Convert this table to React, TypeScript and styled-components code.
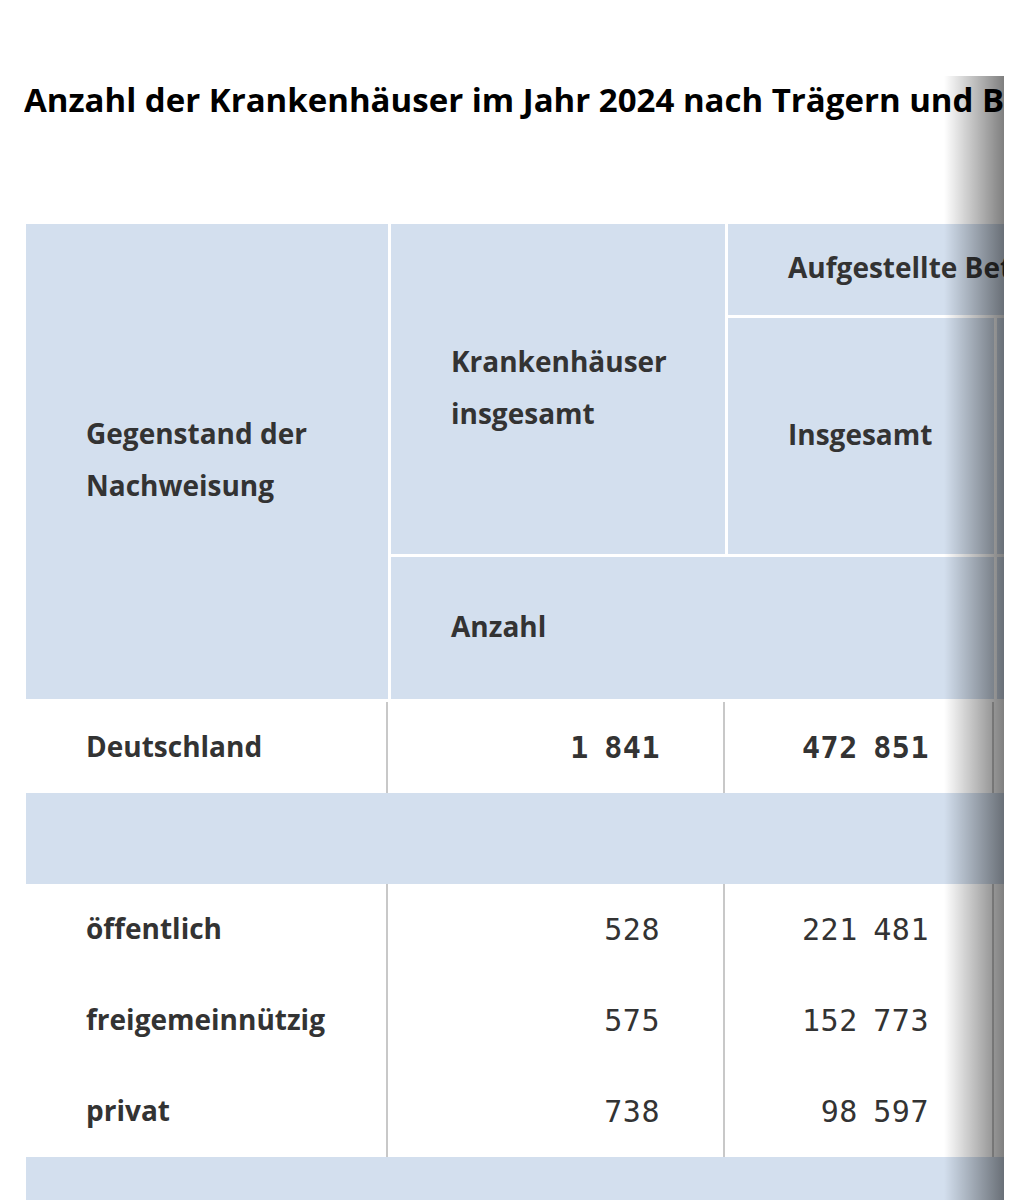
import React from 'react';
import styled, { createGlobalStyle } from 'styled-components';

const GlobalStyle = createGlobalStyle`
    html, body {
        margin: 0;
        padding: 0;
        background: #fff;
    }
    body {
        font-family: "Open Sans", Roboto, "Liberation Sans", sans-serif;
        color: #333;
    }
`;

const HEAD_BG = '#d3dfee';

const ScrollBox = styled.div`
    position: relative;
    margin: 76px 24px 0 24px;
    overflow: hidden;
`;

const Shade = styled.div`
    position: absolute;
    top: 0;
    right: 0;
    bottom: 0;
    width: 60px;
    background: linear-gradient(to right, rgba(0, 0, 0, 0), rgba(0, 0, 0, 0.5));
    pointer-events: none;
`;

const Title = styled.h2`
    margin: 0;
    padding-top: 4px;
    font-size: 33px;
    line-height: 40px;
    font-weight: 700;
    color: #000;
    white-space: nowrap;
`;

const Table = styled.table`
    margin: 104px 0 0 2px;
    border-collapse: separate;
    border-spacing: 0;
    table-layout: fixed;
    width: 1300px;
    font-size: 28px;
    color: #333;
`;

const HeadCell = styled.th<{ $h?: number; $first?: boolean }>`
    background: ${HEAD_BG};
    height: ${p => (p.$h ? `${p.$h}px` : 'auto')};
    padding: 0 20px 5px 60px;
    text-align: left;
    vertical-align: middle;
    font-weight: 700;
    line-height: 52px;
    border-left: ${p => (p.$first ? 'none' : '3px solid #fff')};
    border-bottom: 3px solid #fff;
    box-sizing: border-box;
    white-space: nowrap;
`;

const Row = styled.tr<{ $group?: boolean }>`
    height: 91px;
    background: ${p => (p.$group ? HEAD_BG : '#fff')};
`;

const Label = styled.td`
    padding: 0 20px 4px 60px;
    font-weight: 700;
    border-right: 2px solid #c8c8c8;
    white-space: nowrap;
`;

const Num = styled.td<{ $bold?: boolean }>`
    padding: 0 63px 0 20px;
    text-align: right;
    font-family: "DejaVu Sans Mono", "Liberation Mono", monospace;
    font-size: 30px;
    letter-spacing: 0.5px;
    word-spacing: -3px;
    font-weight: ${p => (p.$bold ? 700 : 400)};
    border-right: 2px solid #c8c8c8;
    white-space: nowrap;
`;

const GroupCell = styled.td`
    padding: 0;
`;

type DataRow = { name: string; total: string; beds: string; perInh: string };

const rows: DataRow[] = [
    { name: 'öffentlich', total: '528', beds: '221 481', perInh: '262' },
    { name: 'freigemeinnützig', total: '575', beds: '152 773', perInh: '181' },
    { name: 'privat', total: '738', beds: '98 597', perInh: '116' }
];

export default function App() {
    return (
        <>
            <GlobalStyle />
            <ScrollBox>
                <Title>Anzahl der Krankenhäuser im Jahr 2024 nach Trägern und Bundesländern</Title>
                <Table>
                    <colgroup>
                        <col style={{ width: 362 }} />
                        <col style={{ width: 337 }} />
                        <col style={{ width: 269 }} />
                        <col style={{ width: 332 }} />
                    </colgroup>
                    <thead>
                        <tr>
                            <HeadCell rowSpan={3} $first>
                                Gegenstand der
                                <br />
                                Nachweisung
                            </HeadCell>
                            <HeadCell rowSpan={2}>
                                Krankenhäuser
                                <br />
                                insgesamt
                            </HeadCell>
                            <HeadCell colSpan={2} $h={94}>
                                Aufgestellte Betten
                            </HeadCell>
                        </tr>
                        <tr>
                            <HeadCell $h={239}>Insgesamt</HeadCell>
                            <HeadCell $h={239}>
                                je 100 000
                                <br />
                                Einwohner
                            </HeadCell>
                        </tr>
                        <tr>
                            <HeadCell colSpan={2} $h={145}>Anzahl</HeadCell>
                            <HeadCell $h={145}>Anzahl</HeadCell>
                        </tr>
                    </thead>
                    <tbody>
                        <Row>
                            <Label>Deutschland</Label>
                            <Num $bold>1 841</Num>
                            <Num $bold>472 851</Num>
                            <Num $bold>559</Num>
                        </Row>
                        <Row $group>
                            <GroupCell colSpan={4} />
                        </Row>
                        {rows.map(r => (
                            <Row key={r.name}>
                                <Label>{r.name}</Label>
                                <Num>{r.total}</Num>
                                <Num>{r.beds}</Num>
                                <Num>{r.perInh}</Num>
                            </Row>
                        ))}
                        <Row $group>
                            <GroupCell colSpan={4} />
                        </Row>
                        <Row>
                            <Label>Baden-Württemberg</Label>
                            <Num>243</Num>
                            <Num>54 215</Num>
                            <Num>486</Num>
                        </Row>
                    </tbody>
                </Table>
                <Shade />
            </ScrollBox>
        </>
    );
}
